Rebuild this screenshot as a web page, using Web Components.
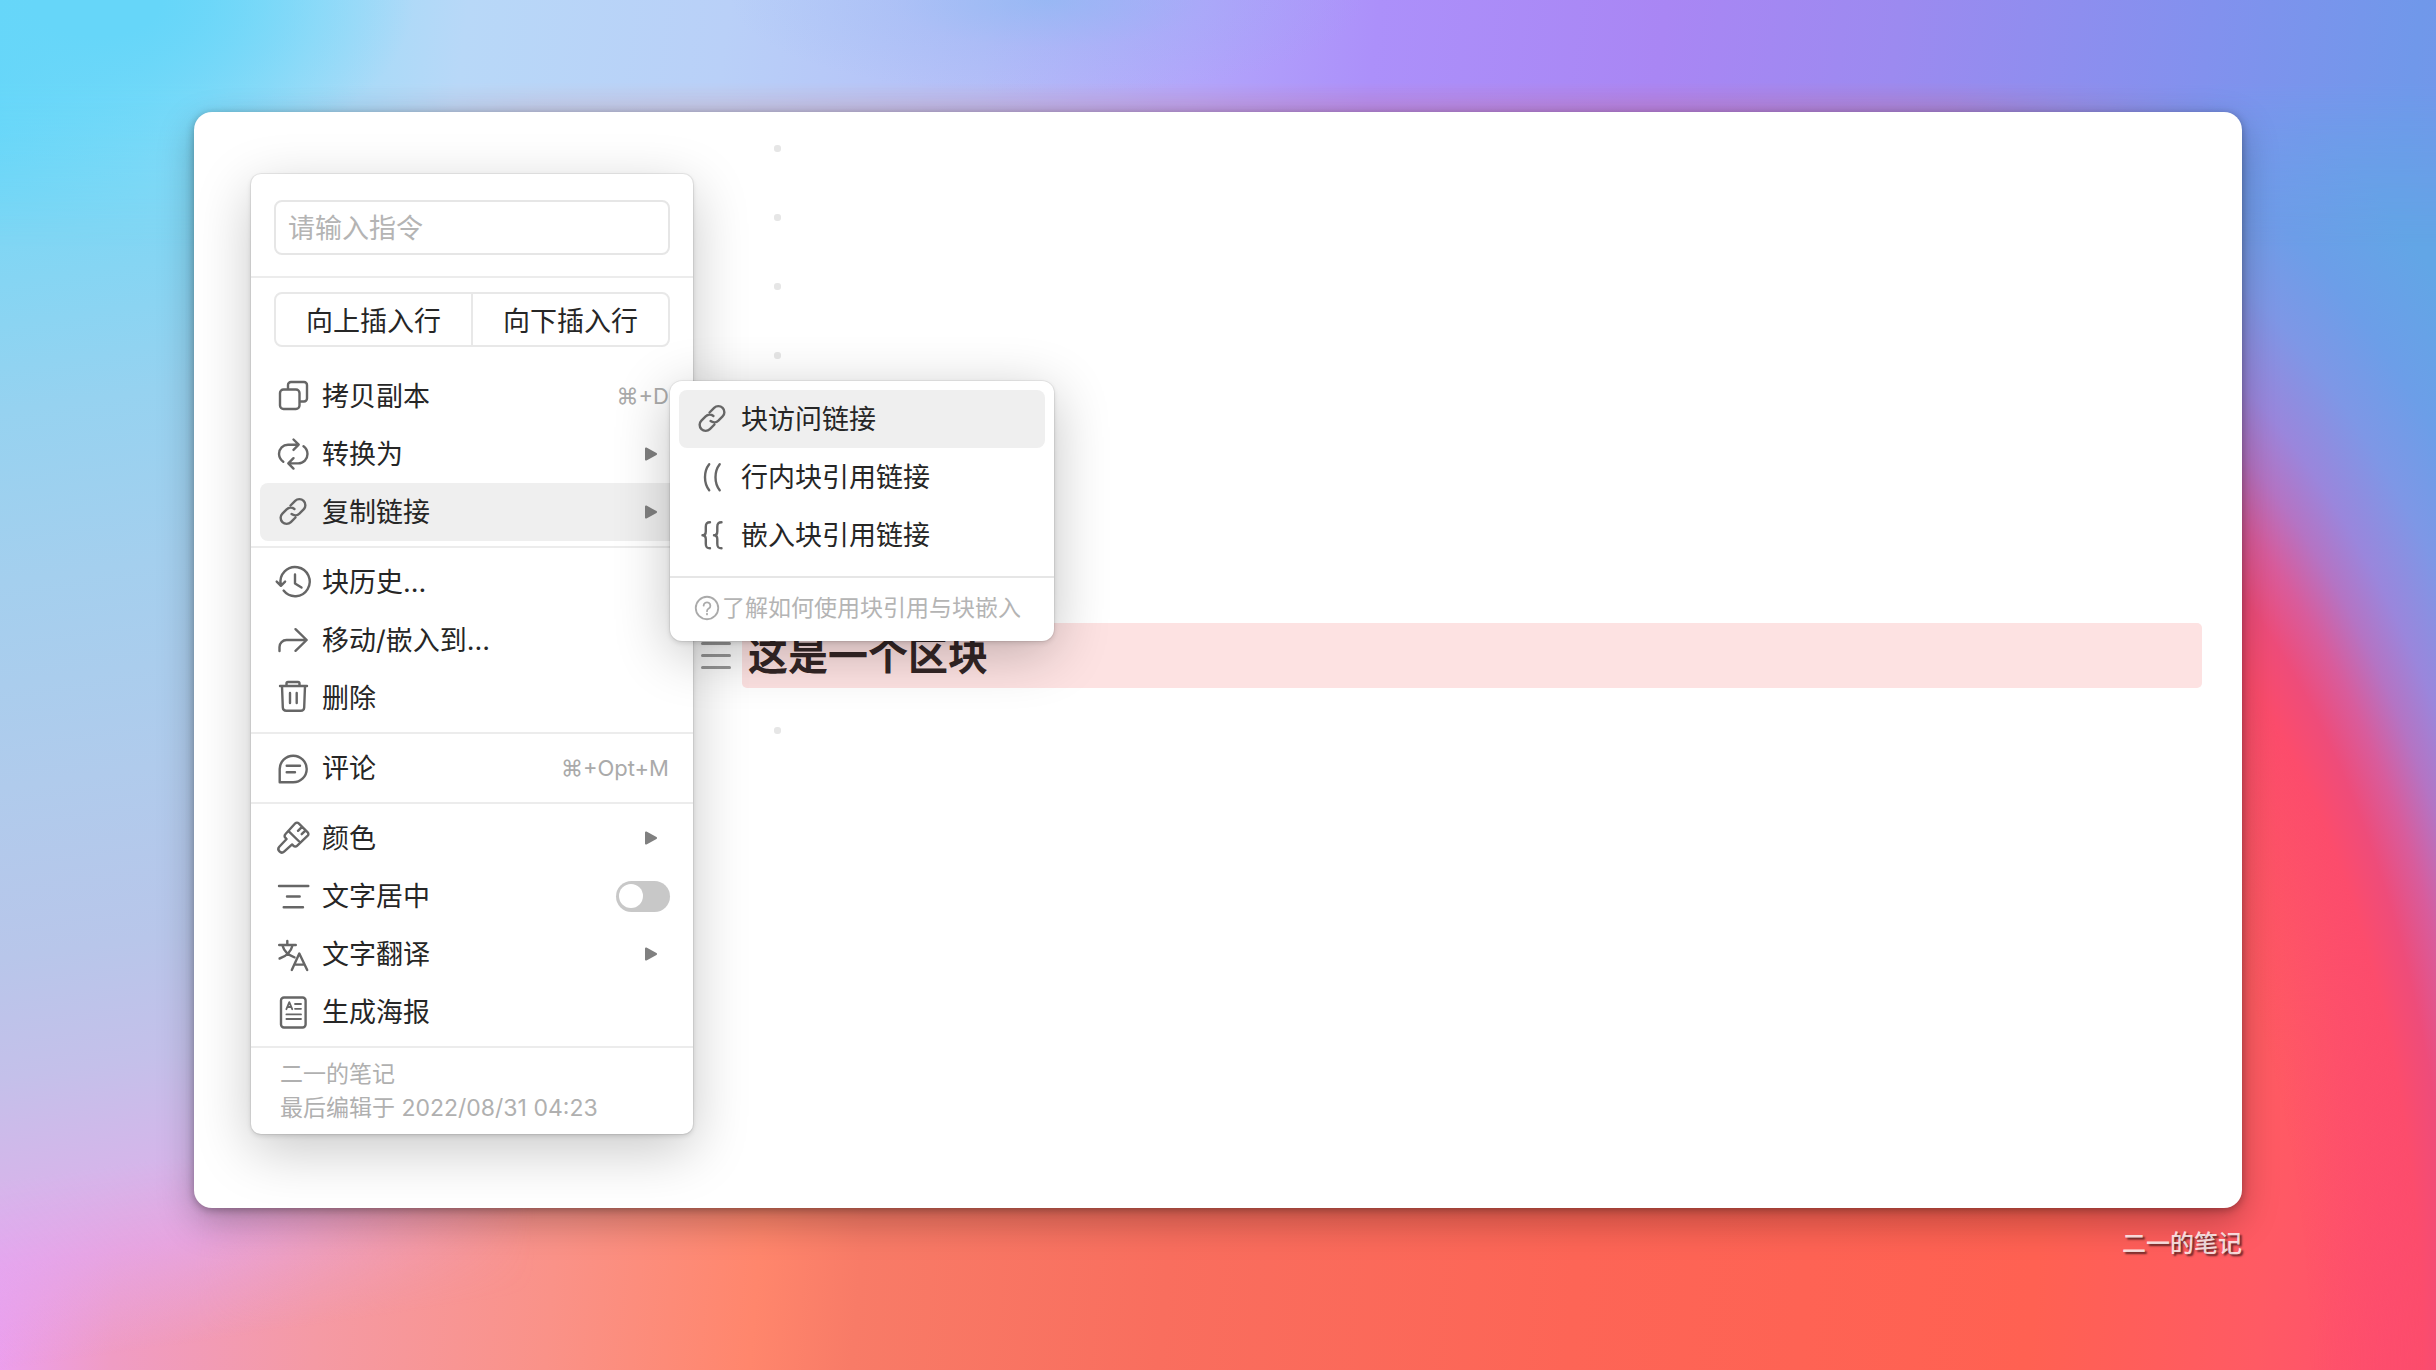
<!DOCTYPE html>
<html lang="zh-CN">
<head>
<meta charset="utf-8">
<meta name="viewport" content="width=device-width, initial-scale=1">
<title>二一的笔记</title>
<style>
  html, body { margin: 0; }
  body {
    font-family: Inter, "Noto Sans CJK SC", sans-serif;
    font-size: 27px;
    line-height: 40px;
    color: #262626;
    --muted: #aaa;
    --line: #ececec;
    --hover: #efefef;
    --icon: #666;
  }
</style>
</head>
<body>
<note-page>
  <note-card>
    <note-line></note-line>
    <note-line></note-line>
    <note-line></note-line>
    <note-line></note-line>
    <note-line></note-line>
    <note-line></note-line>
    <note-line></note-line>
    <note-heading>这是一个区块</note-heading>
    <note-line></note-line>
    <block-menu slot="overlay">
      <menu-item icon="copy" shortcut="⌘+D">拷贝副本</menu-item>
      <menu-item icon="convert" more>转换为</menu-item>
      <menu-item icon="link" more active>复制链接</menu-item>
      <menu-divider></menu-divider>
      <menu-item icon="history">块历史...</menu-item>
      <menu-item icon="move">移动/嵌入到...</menu-item>
      <menu-item icon="trash">删除</menu-item>
      <menu-divider></menu-divider>
      <menu-item icon="comment" shortcut="⌘+Opt+M">评论</menu-item>
      <menu-divider></menu-divider>
      <menu-item icon="brush" more>颜色</menu-item>
      <menu-toggle icon="center">文字居中</menu-toggle>
      <menu-item icon="translate" more>文字翻译</menu-item>
      <menu-item icon="poster">生成海报</menu-item>
      <menu-divider></menu-divider>
      <span slot="owner">二一的笔记</span>
      <span slot="edited">最后编辑于 2022/08/31 04:23</span>
      <sub-menu slot="submenu">
        <menu-item icon="link" active>块访问链接</menu-item>
        <menu-item icon="parens">行内块引用链接</menu-item>
        <menu-item icon="braces">嵌入块引用链接</menu-item>
        <span slot="help">了解如何使用块引用与块嵌入</span>
      </sub-menu>
    </block-menu>
  </note-card>
  <span slot="caption">二一的笔记</span>
</note-page>

<script>
const ICONS = {
  copy: '<rect x="3" y="9.5" width="19.5" height="19.5" rx="3.5"/><path d="M11 8.5V5a3 3 0 0 1 3-3h13a3 3 0 0 1 3 3v13.5a3 3 0 0 1-3 3h-3.5"/>',
  convert: '<path d="M6.3 23.7A10 10 0 0 1 2 16c0-5.4 4-9.3 9-9.3h10.5M16.5 1.5l5.2 5.2-5.2 5.2M26.5 8.3a9.6 9.6 0 0 1 4 7.7c0 5.3-4 9.4-9.3 9.4h-9.7M16.5 20.2l-5.2 5.2 5.2 5.2"/>',
  link: '<g transform="rotate(-45 16 15.5)"><path d="M13.5 21.5H7a6 6 0 0 1 0-12h6a6 6 0 0 1 5.8 5.2M18.5 9.5H25a6 6 0 0 1 0 12h-6a6 6 0 0 1-5.8-5.2"/></g>',
  history: '<path d="M3.8 18.5A14.6 14.6 0 1 1 6.6 24.6M-.3 15.6l4.2 4.2 4.2-4.2M18 8.5v9l6.5 4"/>',
  move: '<path d="M2.5 27v-4a7 7 0 0 1 7-7h20M18.5 5.2L29.7 16 18.5 26.8"/>',
  trash: '<path d="M3 4h27M9.5 4V1.5A1.5 1.5 0 0 1 11 0h10a1.5 1.5 0 0 1 1.5 1.5V4M5 4l.8 21.5a3.5 3.5 0 0 0 3.5 3.3h14.4a3.5 3.5 0 0 0 3.5-3.3L28 4M13 11v10M19.7 11v10"/>',
  comment: '<path d="M2.7 30.3V17a13.5 13.3 0 1 1 13.5 13.3zM9.7 13.7H23M9.7 20.3H18"/>',
  brush: '<path d="M18.3 1.3a2.4 2.4 0 0 1 3.4 0l9 9a2.4 2.4 0 0 1 0 3.4L20 23.8a2.4 2.4 0 0 1-3.4 0l-1.5-1.4-8 7.2a3.4 3.4 0 0 1-4.8-4.8l7.3-7.8-1.3-1.3a2.4 2.4 0 0 1 0-3.4zM11.3 8.8L23.2 20.5M25 4.8l-4 4M28.3 8.6l-3.6 3.6"/>',
  center: '<path d="M2 6h29.3M10 16.5h12.7M6.7 27.2H26"/>',
  translate: '<path d="M2.2 7h16.6M10.3 3v4M15.6 7.2C14 13.5 9.5 18.2 2.6 20.5M5.3 7.2C7 13 11.5 17.5 17.5 19.3M14.8 32l7.5-16.5L30.2 32M17.6 26.6h9.8"/>',
  poster: '<rect x="4" y="1.5" width="24.6" height="30" rx="3"/><path stroke-width="1.8" d="M9.4 13.2l2.9-7 2.9 7M10.4 11h3.8M18 8h6M18 12.8h6M9.4 18.4H24M9.4 23H24"/>',
  parens: '<path d="M13.2 3.3c-5.6 7.2-5.6 18.8 0 26M23.7 3.3c-5.6 7.2-5.6 18.8 0 26"/>',
  braces: '<path d="M14 3.3c-3.5 0-4.2 1.5-4.2 4.5v4.5c0 2.5-1 4-3.3 4 2.3 0 3.3 1.5 3.3 4v4.5c0 3 .7 4.5 4.2 4.5M25.5 3.3c-3.5 0-4.2 1.5-4.2 4.5v4.5c0 2.5-1 4-3.3 4 2.3 0 3.3 1.5 3.3 4v4.5c0 3 .7 4.5 4.2 4.5"/>',
  help: '<circle cx="16" cy="16" r="15"/><path d="M11.5 12.8a4.5 4.5 0 1 1 6.8 4c-1.6 1-2.3 1.7-2.3 3.4M16 23.5v1"/>',
};

const define = (name, html, setup) => {
  const template = document.createElement('template');
  template.innerHTML = html;
  customElements.define(name, class extends HTMLElement {
    connectedCallback() {
      if (this.shadowRoot) return;
      this.attachShadow({ mode: 'open' }).append(template.content.cloneNode(true));
      if (setup) setup(this, this.shadowRoot);
    }
  });
};

define('ui-icon', `
  <style>
    :host { display: block; flex: none; width: 32px; height: 32px; }
    svg { display: block; width: 100%; height: 100%; overflow: visible; fill: none; stroke: currentColor; stroke-width: 2.4; stroke-linecap: round; stroke-linejoin: round; }
  </style>
  <svg viewBox="0 0 32 32" aria-hidden="true"></svg>`,
  (host, root) => { root.querySelector('svg').innerHTML = ICONS[host.getAttribute('name')] || ''; });

define('wall-paper', `
  <style>
    :host { position: absolute; inset: 0; display: grid; overflow: hidden; }
    div { grid-area: 1 / 1; }
    .base { background: linear-gradient(95deg, #ec9ff6 0, #ec9ff2 4%, #f09cc4 9%, #f59aa4 17%, #fa9288 26%, #ff866c 34%, #f87b67 38%, #f96e5e 50%, #fd6556 66%, #ff6152 84%, #ff5a64 93%, #ff4f6e 98%); }
    .left {
      background: linear-gradient(172deg, #64d6fa 0, #6cd8f8 7%, #80d6f4 14%, #96d2f0 24%, #a4cfee 34%, #b0cbec 46%, #b8c6ea 56%, #c4c0ea 63%, #d4b6ea 69%, rgba(226, 168, 238, .7) 74%, rgba(236, 160, 240, 0) 80%);
      mask-image: linear-gradient(90deg, #000 8%, transparent 22%);
    }
    .right {
      background: radial-gradient(ellipse 33% 107% at 79% 100%, rgba(255, 86, 92, 0) 48%, #fc4c6c 62%, #ee4c7a 66%, #d85c9c 70%, #b474c4 74%, #9a86dc 78%, #7e97e6 84%, #6c9ee8 90%, #62a6e6 98%);
      mask-image: linear-gradient(90deg, transparent 80%, #000 91%);
    }
    .top {
      background:
        radial-gradient(ellipse 13% 13% at 4% 0, #66d6f9 20%, rgba(110, 216, 250, 0) 100%),
        radial-gradient(ellipse 13% 7% at 43% 0, rgba(130, 184, 240, .55), rgba(140, 180, 240, .2) 50%, rgba(150, 180, 240, 0)),
        linear-gradient(97deg, #66d6f9 0, #7cdaf8 6%, #a0dcf8 12%, #b8d8f8 18%, #b9d0f8 28%, #b4bef8 38%, #b2a6fb 46%, #ac90fa 53%, #a986f4 64%, #9c8af0 73%, #8291ee 85%, #7098ea 93%, #7894e8 100%);
      mask-image: linear-gradient(180deg, #000 6%, transparent 18%);
    }
  </style>
  <div class="base"></div><div class="left"></div><div class="right"></div><div class="top"></div>`);

define('note-page', `
  <style>
    :host { position: relative; display: flex; flex-direction: column; box-sizing: border-box; min-height: 100vh; padding: 112px 194px 108px; }
    main { position: relative; display: flex; flex-direction: column; flex: 1; }
    footer { position: relative; height: 54px; display: flex; align-items: flex-end; justify-content: flex-end; font-size: 24px; line-height: 36px; font-weight: 500; color: rgba(255, 255, 255, .8); text-shadow: 2px 2px 2px rgba(0, 0, 0, .6); }
  </style>
  <wall-paper></wall-paper>
  <main><slot></slot></main>
  <footer><slot name="caption"></slot></footer>`);

define('note-card', `
  <style>
    :host { position: relative; display: block; flex: 1; padding: 2px 40px 0 507px; border-radius: 18px; background: #fff; box-shadow: 0 2px 8px rgba(0, 0, 0, .3), 0 14px 36px rgba(0, 0, 0, .26); }
  </style>
  <slot></slot>
  <slot name="overlay"></slot>`);

define('note-line', `
  <style>
    :host { display: flex; align-items: center; height: 69px; padding-left: 73px; }
    i { width: 7px; height: 7px; border-radius: 3px; background: #e6e6e6; }
  </style>
  <i></i>`);

define('note-heading', `
  <style>
    :host { display: flex; align-items: center; gap: 11px; margin: 26px 0 8px; }
    button { display: flex; flex-direction: column; gap: 9px; width: 30px; padding: 0; border: 0; background: none; }
    button i { width: 30px; height: 3px; border-radius: 2px; background: #999; }
    h2 { flex: 1; margin: 0; padding: 0 6px; border-radius: 5px; background: #fde2e2; font-size: 40px; line-height: 65px; font-weight: 700; color: #332626; }
  </style>
  <button type="button" aria-label="块菜单"><i></i><i></i><i></i></button>
  <h2><slot></slot></h2>`);

define('menu-divider', `
  <style>:host { display: block; height: 2px; margin: 5px 0; background: var(--line); }</style>`);

define('menu-item', `
  <style>
    :host { display: block; padding: 0 9px; }
    button { display: flex; align-items: center; gap: 13px; box-sizing: border-box; width: 100%; height: 58px; padding: 0 15px 0 17px; border: 0; border-radius: 8px; background: none; font: inherit; color: inherit; text-align: left; }
    :host([active]) button { background: var(--hover); }
    ui-icon { color: var(--icon); }
    .label { flex: 1; padding-top: 2px; white-space: nowrap; }
    kbd { font-family: inherit; font-size: 22px; color: var(--muted); }
    .arrow { width: 12px; height: 14px; margin-right: 12px; fill: #808080; stroke: #808080; stroke-width: 2; stroke-linejoin: round; }
  </style>
  <button type="button"><span class="label"><slot></slot></span></button>`,
  (host, root) => {
    const button = root.querySelector('button');
    button.insertAdjacentHTML('afterbegin', `<ui-icon name="${host.getAttribute('icon')}"></ui-icon>`);
    if (host.hasAttribute('shortcut')) button.insertAdjacentHTML('beforeend', `<kbd>${host.getAttribute('shortcut')}</kbd>`);
    if (host.hasAttribute('more')) button.insertAdjacentHTML('beforeend', '<svg class="arrow" viewBox="0 0 12 14" aria-hidden="true"><path d="M1 1.5L11 7 1 12.5z"/></svg>');
  });

define('menu-toggle', `
  <style>
    :host { display: block; padding: 0 9px; }
    label { display: flex; align-items: center; gap: 13px; height: 58px; padding: 0 14px 0 17px; }
    ui-icon { color: var(--icon); }
    span { flex: 1; padding-top: 2px; }
    input { appearance: none; display: flex; align-items: center; box-sizing: border-box; width: 54px; height: 31px; margin: 0; padding: 0 3px; border-radius: 16px; background: #c8c8c8; }
    input::before { content: ""; width: 24px; height: 24px; border-radius: 50%; background: #fff; }
    input:checked { justify-content: flex-end; background: #4a8cf7; }
  </style>
  <label><ui-icon name="center"></ui-icon><span><slot></slot></span><input type="checkbox" role="switch"></label>`);

define('block-menu', `
  <style>
    :host { position: absolute; top: 62px; left: 57px; width: 442px; border-radius: 10px; background: #fff; box-shadow: 0 0 0 1px rgba(0, 0, 0, .06), 0 2px 5px rgba(0, 0, 0, .13), 0 16px 56px rgba(0, 0, 0, .22); }
    .search { padding: 26px 23px 21px; }
    input { display: block; box-sizing: border-box; width: 100%; height: 55px; padding: 2px 12px 0; border: 2px solid #e6e6e6; border-radius: 8px; outline: 0; background: #fff; font: inherit; color: inherit; }
    input::placeholder { color: #b4b4b4; opacity: 1; }
    .insert { display: flex; margin: 0 23px 20px; border: 2px solid #e8e8e8; border-radius: 8px; }
    .insert button { flex: 1; height: 51px; padding: 4px 0 0; border: 0; background: none; font: inherit; color: inherit; white-space: nowrap; }
    .insert button + button { border-left: 2px solid #e8e8e8; }
    hr { height: 2px; margin: 0 0 14px; border: 0; background: var(--line); }
    footer { display: flex; flex-direction: column; padding: 4px 29px 9px; font-size: 23px; line-height: 34px; color: #b0b0b0; }
  </style>
  <div class="search"><input type="text" placeholder="请输入指令" aria-label="请输入指令"></div>
  <hr>
  <div class="insert"><button type="button">向上插入行</button><button type="button">向下插入行</button></div>
  <slot></slot>
  <footer><slot name="owner"></slot><slot name="edited"></slot></footer>
  <slot name="submenu"></slot>`);

define('sub-menu', `
  <style>
    :host { position: absolute; top: 207px; left: 419px; width: 384px; padding: 9px 0 3px; border-radius: 12px; background: #fff; box-shadow: 0 0 0 1px rgba(0, 0, 0, .05), 0 2px 5px rgba(0, 0, 0, .13), 0 12px 56px rgba(0, 0, 0, .24); }
    hr { height: 2px; margin: 12px 0 0; border: 0; background: #e6e6e6; }
    a { display: flex; align-items: center; gap: 3px; height: 60px; padding-left: 25px; font-size: 23px; color: #b4b4b4; text-decoration: none; white-space: nowrap; }
    ui-icon { width: 24px; height: 24px; color: #aaa; }
  </style>
  <slot></slot>
  <hr>
  <a href="#help"><ui-icon name="help"></ui-icon><slot name="help"></slot></a>`);
</script>
</body>
</html>
